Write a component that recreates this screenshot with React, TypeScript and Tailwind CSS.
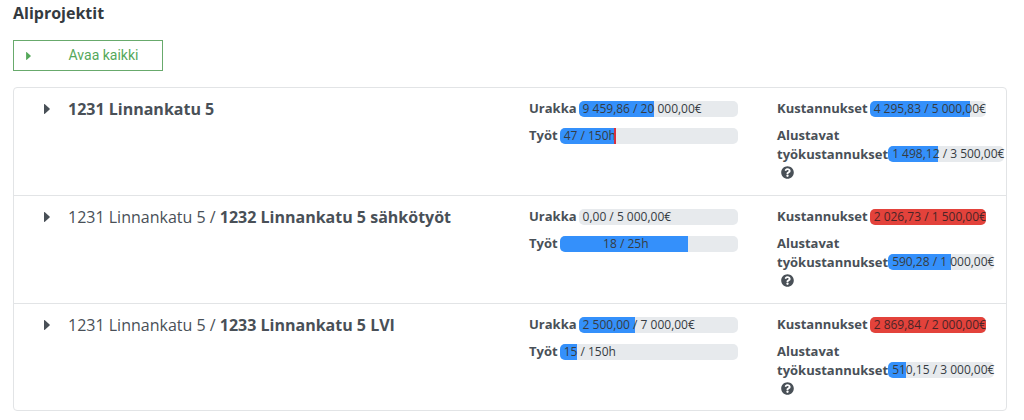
import { useId } from "react";
import clsx from "clsx";

type Meter = {
  text: string;
  percent: number;
  over?: boolean;
  extra?: number;
};

type Project = {
  parent?: string;
  name: string;
  contract: Meter;
  work: Meter;
  costs: Meter;
  laborCosts: Meter;
};

const projects: Project[] = [
  {
    name: "1231 Linnankatu 5",
    contract: { text: "9 459,86 / 20 000,00€", percent: 47.3 },
    work: { text: "47 / 150h", percent: 30.4, extra: 1.2 },
    costs: { text: "4 295,83 / 5 000,00€", percent: 85.9 },
    laborCosts: { text: "1 498,12 / 3 500,00€", percent: 42.8 },
  },
  {
    parent: "1231 Linnankatu 5",
    name: "1232 Linnankatu 5 sähkötyöt",
    contract: { text: "0,00 / 5 000,00€", percent: 0 },
    work: { text: "18 / 25h", percent: 72 },
    costs: { text: "2 026,73 / 1 500,00€", percent: 100, over: true },
    laborCosts: { text: "590,28 / 1 000,00€", percent: 59 },
  },
  {
    parent: "1231 Linnankatu 5",
    name: "1233 Linnankatu 5 LVI",
    contract: { text: "2 500,00 / 7 000,00€", percent: 35.7 },
    work: { text: "15 / 150h", percent: 10 },
    costs: { text: "2 869,84 / 2 000,00€", percent: 100, over: true },
    laborCosts: { text: "510,15 / 3 000,00€", percent: 17 },
  },
];

function Caret({ className }: { className: string }) {
  return (
    <svg viewBox="0 0 6 10" className={className} fill="currentColor" aria-hidden="true">
      <path d="M0 .6v8.800c0 .5.5.7.9.3l4.700-4.200c.3-.3.3-.7 0-1L.9.3C.5-.1 0 .1 0 .6Z" />
    </svg>
  );
}

function HelpIcon() {
  return (
    <svg viewBox="0 0 512 512" className="size-[13px]" fill="currentColor" aria-hidden="true">
      <path d="M504 256c0 137-111 248-248 248S8 393 8 256 119 8 256 8s248 111 248 248ZM262.700 90c-54.500 0-89.300 23-116.500 63.800-3.500 5.300-2.400 12.400 2.700 16.300l34.700 26.300c5.200 3.900 12.600 3 16.700-2.100 17.900-22.700 30.100-35.800 57.300-35.800 20.400 0 45.700 13.100 45.700 33 0 15-12.400 22.700-32.500 34C247.100 238.500 216 255 216 296v4c0 6.600 5.400 12 12 12h56c6.600 0 12-5.400 12-12v-1.300c0-28.500 83.200-29.600 83.200-106.700 0-58-60.200-102-116.500-102ZM256 338c-25.400 0-46 20.600-46 46s20.600 46 46 46 46-20.600 46-46-20.600-46-46-46Z" />
    </svg>
  );
}

function Bar({ meter, labelId, className }: { meter: Meter; labelId: string; className?: string }) {
  return (
    <div
      role="progressbar"
      aria-labelledby={labelId}
      aria-valuenow={meter.percent}
      aria-valuetext={meter.text}
      className={clsx("flex h-4 rounded-[5px] bg-[#e7eaed] text-[12px] leading-4 text-[#363c42]", className)}
    >
      {/* the text is wider than a short fill and runs out over the track */}
      <div
        className={clsx(
          "shrink-0 rounded-l-[5px] text-center whitespace-nowrap",
          meter.over ? "rounded-r-[5px] bg-[#e3423b] text-[#4a2527]" : "bg-[#3490fb]",
        )}
        style={{ width: `${meter.percent}%` }}
      >
        <span className="pl-1">{meter.text}</span>
      </div>
      {meter.extra && <div className="z-10 bg-[#d9303e]" style={{ width: `${meter.extra}%` }} />}
    </div>
  );
}

function MeterRow({ label, meter }: { label: string; meter: Meter }) {
  const id = useId();
  return (
    <div className="flex items-center gap-0.5">
      <span id={id} className="text-[13px] leading-[19px] font-bold">
        {label}
      </span>
      <Bar meter={meter} labelId={id} className="min-w-0 flex-1" />
    </div>
  );
}

function LaborCosts({ meter }: { meter: Meter }) {
  const id = useId();
  return (
    <div className="text-[13px] leading-[19px]">
      <div className="flex items-end">
        <span id={id} className="font-bold">
          Alustavat
          <br />
          työkustannukset
        </span>
        <Bar meter={meter} labelId={id} className="mb-0.5 shrink-0" />
      </div>
      <button type="button" aria-label="Ohje" className="ml-1 flex h-4 items-center">
        <HelpIcon />
      </button>
    </div>
  );
}

function ProjectRow({ project }: { project: Project }) {
  return (
    <li className="grid grid-cols-4 border-b border-[#e2e4e6] pt-[11px] pb-[15px] last:border-b-0 last:pb-[14px]">
      <div className="col-span-2 flex items-start pl-[30px]">
        <button type="button" aria-label={`Avaa ${project.name}`} className="flex h-5 w-6 items-center">
          <Caret className="h-[10px] w-[6px]" />
        </button>
        <h3 className="text-[16px] leading-5">
          {project.parent && <>{project.parent} / </>}
          <strong>{project.name}</strong>
        </h3>
      </div>
      <div className="flex flex-col gap-2 pr-5 pl-[19px]">
        <MeterRow label="Urakka" meter={project.contract} />
        <MeterRow label="Työt" meter={project.work} />
      </div>
      <div className="flex flex-col gap-2 pr-5 pl-[19px]">
        <MeterRow label="Kustannukset" meter={project.costs} />
        <LaborCosts meter={project.laborCosts} />
      </div>
    </li>
  );
}

export default function App() {
  return (
    <main className="bg-white pt-[3px] pr-[17px] pb-2 pl-[13px] font-['Open_Sans','Noto_Sans',sans-serif] text-[#495057]">
      <h2 className="text-[16px] leading-5 font-bold text-[#343a40]">Aliprojektit</h2>
      <button
        type="button"
        className="mt-[17px] flex h-[31px] w-[150px] items-center border border-[#68aa6c] pl-3 font-[Roboto,sans-serif] text-[14px] text-[#55a85a]"
      >
        <Caret className="h-2 w-[5px]" />
        <span className="flex-1 pl-[14px] text-center">Avaa kaikki</span>
      </button>
      <ul className="mt-4 rounded border border-[#e2e4e6]">
        {projects.map((project) => (
          <ProjectRow key={project.name} project={project} />
        ))}
      </ul>
    </main>
  );
}
